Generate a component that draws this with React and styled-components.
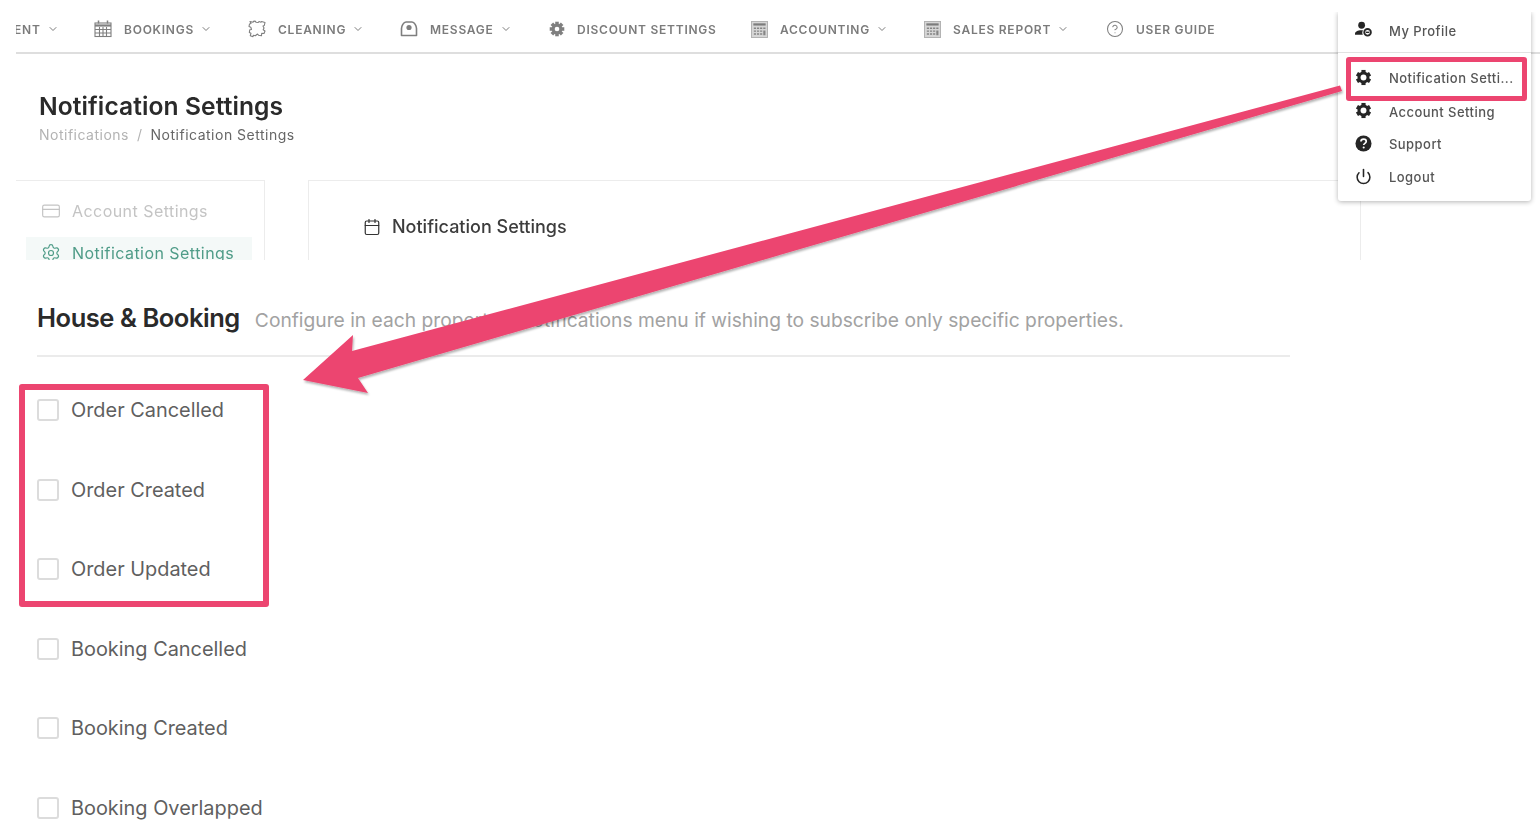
import React from 'react';
import styled, { createGlobalStyle } from 'styled-components';
import { Calendar, ChevronDown, Settings, CircleHelp, Power, CreditCard } from 'lucide-react';

const Global = createGlobalStyle`
  html, body { margin: 0; padding: 0; background: #fff; }
  body { font-family: Inter, "Liberation Sans", sans-serif; }
`;
const Page = styled.div`
  position: relative; width: 1540px; height: 840px; overflow: hidden; background: #fff;
`;
const Top = styled.div`
  height: 260px; margin-left: 16px; overflow: hidden; filter: blur(0.45px);
`;
const Nav = styled.nav`
  border-bottom: 2px solid #dedede; box-sizing: border-box; height: 54px;
  display: flex; align-items: center; padding-top: 6px; overflow: hidden; white-space: nowrap;
`;
const NavItem = styled.div`
  display: flex; align-items: center; flex: none; width: ${p => p.$w}px;
  color: #7b7b7b; font-size: 12px; font-weight: 600; letter-spacing: .75px;
`;
const NavIcon = styled.span`
  display: inline-flex; align-items: center; justify-content: center; width: 18px; height: 18px;
  margin-right: ${p => p.$gap ?? 12}px; color: #7f7f7f; flex: none;
`;
const Chev = styled(ChevronDown)`
  width: 12px; height: 12px; margin-left: 6px; color: #7b7b7b;
`;
const Head = styled.div`
  padding: 38px 0 0 23px; box-sizing: border-box; height: 126px;
`;
const Title = styled.h1`
  margin: 0; font-size: 24.6px; line-height: 28px; font-weight: 600; color: #2a2a2a; letter-spacing: .08px;
`;
const Crumbs = styled.div`
  margin-top: 6px; font-size: 14px; line-height: 18px; color: #b3b3b3; display: flex; gap: 8px; letter-spacing: .5px;
`;
const Crumb = styled.span`
  color: #666;
`;
const Columns = styled.div`
  display: flex; height: 80px;
`;
const Side = styled.aside`
  width: 249px; flex: none; border: 1px solid #ececec; border-width: 1px 1px 0 0; box-sizing: border-box; padding: 10px 12px 0 10px;
`;
const SideItem = styled.div`
  height: ${p => p.$h}px; margin-top: ${p => p.$top ?? 0}px; display: flex; align-items: center; gap: 10px; padding-left: 16px; box-sizing: border-box;
  font-size: 16px; letter-spacing: .45px; white-space: nowrap;
  color: ${p => p.$active ? '#4f9c88' : '#c4c4c4'}; background: ${p => p.$active ? '#f4f9f8' : 'none'};
  svg { width: 20px; height: 20px; stroke-width: 1.4; flex: none; margin-left: -1px; margin-right: 1px; }
`;
const Card = styled.section`
  margin-left: 43px; width: 1053px; box-sizing: border-box; border: 1px solid #ececec; border-bottom: 0;
  padding: 35px 0 0 54px; display: flex; align-items: flex-start; gap: 11px;
  font-size: 18px; line-height: 22px; font-weight: 500; color: #3c3c3c;
  svg { width: 18px; height: 18px; margin-top: 2px; stroke-width: 1.6; color: #333; }
`;
const Lower = styled.main`
  padding: 0 0 0 37px;
`;
const SectionHead = styled.div`
  width: 1253px; height: 97px; box-sizing: border-box; border-bottom: 2px solid #ebebeb;
  display: flex; align-items: baseline; gap: 15px; padding-top: 41px;
`;
const SectionTitle = styled.h2`
  margin: 0; font-size: 25.5px; line-height: 34px; font-weight: 600; color: #2a2a2a; letter-spacing: -.45px;
`;
const SectionNote = styled.span`
  font-size: 19.23px; color: #a2a2a2; letter-spacing: 0; white-space: nowrap;
`;
const Rows = styled.div`
  padding-top: 29px;
`;
const Row = styled.label`
  height: 79.6px; display: flex; align-items: flex-start; gap: 12px; font-size: 19.9px; line-height: 48px; color: #5f5f5f; letter-spacing: 0;
`;
const Box = styled.span`
  width: 22px; height: 22px; box-sizing: border-box; border: 2px solid #dcdcdc; border-radius: 3px; margin-top: 13px; flex: none;
`;
const Menu = styled.div`
  position: absolute; left: 1338px; top: 12px; width: 193px; height: 189px; background: #fff; border-radius: 0 0 3px 3px;
  box-shadow: 0 1px 5px rgba(0,0,0,.3); clip-path: inset(0 -8px -8px -8px); filter: blur(0.4px);
`;
const MenuItem = styled.div`
  height: ${p => p.$h}px; display: flex; align-items: center; padding: 0 0 ${p => p.$line ? 2 : 0}px 17px; gap: 17px; box-sizing: border-box;
  font-size: 13px; letter-spacing: .45px; color: #555; font-weight: 500; white-space: nowrap;
  border-bottom: ${p => p.$line ? '1px solid #e2e2e2' : '0'};
  svg { width: 17px; height: 17px; color: #262626; flex: none; margin-top: ${p => p.$lift ?? -4}px; }
`;
const Highlight = styled.div`
  position: absolute; box-sizing: border-box; left: ${p => p.$x}px; top: ${p => p.$y}px; width: ${p => p.$w}px; height: ${p => p.$h}px;
  border: ${p => p.$b}px solid #ec4570; border-radius: 3px;
`;
const Arrow = styled.svg`
  position: absolute; left: 0; top: 0; pointer-events: none;
`;

const Cal = () => (
  <svg viewBox="0 0 18 18" width="18" height="18" fill="none" stroke="currentColor" strokeWidth="1.100">
    <rect x="1" y="3" width="16" height="13.500" />
    <path d="M1 5.500h16" strokeWidth="2.200" />
    <path d="M1 9.500h16M1 13h16M5.500 7V16.500M9 7V16.500M12.500 7V16.500" />
    <path d="M4.500 .5v3M13.500 .5v3" strokeWidth="1.500" />
  </svg>
);
const Puzzle = () => (
  <svg viewBox="0 0 18 18" width="18" height="18" fill="none" stroke="currentColor" strokeWidth="1.100" strokeLinejoin="round">
    <path d="M2 1.500l3 .7c.5-1.400 2.500-1.400 3 0l2.200.3 .8-1 2 .7 .5-.7 3.500 1-.7 3-1.300.5 1 2-.8 1.800 1.800 1.200-1 2.500-2.300-.3-.2 2.500-3-.5-1-1.200-2.200 1.700-2-.5-.3 1.500-2.700-1 .7-2.500-1.700-.7.5-2.800 1.700-.2-.7-2.300L1 6.500l.5-2.500 1.500-.5z" />
  </svg>
);
const Bag = () => (
  <svg viewBox="0 0 18 18" width="18" height="18" fill="none" stroke="currentColor" strokeWidth="1.600">
    <path d="M1.500 15.500V8.500C1.500 6 3.500 2 6 2h6c2.500 0 4.500 4 4.500 6.500v7z" strokeLinejoin="round" />
    <circle cx="9" cy="7.500" r="2.600" fill="currentColor" stroke="none" />
  </svg>
);
const Gear = () => (
  <svg viewBox="0 0 18 18" width="16" height="16">
    <g fill="currentColor">
      <circle cx="9" cy="9" r="6" />
      {[0, 45, 90, 135, 180, 225, 270, 315].map(a => (
        <rect key={a} x="7" y=".8" width="4" height="4" transform={`rotate(${a} 9 9)`} />
      ))}
    </g>
    <circle cx="9" cy="9" r="2.600" fill="#fff" />
  </svg>
);
const Calc = () => (
  <svg viewBox="0 0 18 18" width="17" height="17">
    <rect x=".5" y=".5" width="17" height="17" fill="#d6d6d6" stroke="#b0b0b0" />
    <rect x="2.500" y="2.500" width="13" height="2.300" fill="#7c7c7c" />
    <path d="M3 7h2.300v1.500H3zM6.300 7h2.300v1.500H6.300zM9.600 7h2.300v1.500H9.600zM13 7h2.300v1.500H13zM3 10h2.300v1.500H3zM6.300 10h2.300v1.500H6.300zM9.600 10h2.300v1.500H9.600zM13 10h2.300v5H13zM3 13h2.300v1.500H3zM6.300 13h2.300v1.500H6.300zM9.600 13h2.300v1.500H9.600z" fill="#858585" />
  </svg>
);
const Profile = () => (
  <svg viewBox="0 0 18 18" width="18" height="18" fill="currentColor">
    <circle cx="7" cy="4.500" r="3.600" />
    <path d="M0 13.500c0-2.500 3-3.800 6.500-3.800 1 0 1.500.1 2 .3-1 1.200-1 3.200-.2 4.500H0z" />
    <circle cx="13.300" cy="12" r="3.500" fill="none" stroke="currentColor" strokeWidth="2" />
    <path d="M11.500 12h3.600" stroke="currentColor" strokeWidth="1.500" />
  </svg>
);
const MenuGear = () => (
  <svg viewBox="0 0 18 18" width="16" height="16">
    <g fill="currentColor">
      <circle cx="9" cy="9" r="6.300" />
      {[0, 60, 120, 180, 240, 300].map(a => (
        <rect key={a} x="6.800" y="1" width="4.400" height="4" transform={`rotate(${a} 9 9)`} />
      ))}
    </g>
    <circle cx="9" cy="9" r="3.100" fill="#fff" />
  </svg>
);
const HelpSolid = () => (
  <svg viewBox="0 0 18 18" width="18" height="18">
    <circle cx="9" cy="9" r="8.500" fill="currentColor" />
    <path d="M6.300 7c0-1.700 1.200-2.600 2.800-2.600S11.900 5.300 11.900 6.800c0 2-2.700 2-2.700 3.800" fill="none" stroke="#fff" strokeWidth="1.800" />
    <circle cx="9.200" cy="13.200" r="1.100" fill="#fff" />
  </svg>
);

const nav = [
  { t: 'ENT', w: 78, clip: true },
  { t: 'BOOKINGS', w: 154, I: Cal, c: 1 },
  { t: 'CLEANING', w: 152, I: Puzzle, c: 1 },
  { t: 'MESSAGE', w: 148, I: Bag, c: 1 },
  { t: 'DISCOUNT SETTINGS', w: 202, I: Gear, gap: 11 },
  { t: 'ACCOUNTING', w: 173, I: Calc, c: 1 },
  { t: 'SALES REPORT', w: 183, I: Calc, c: 1 },
  { t: 'USER GUIDE', w: 180, I: () => <CircleHelp size={18} strokeWidth={1.4} /> },
];
const rows = ['Order Cancelled', 'Order Created', 'Order Updated', 'Booking Cancelled', 'Booking Created', 'Booking Overlapped'];

export default function App() {
  return (
    <Page>
      <Global />
      <Top>
        <Nav>
          {nav.map(n => (
            <NavItem key={n.t} $w={n.w}>
              {n.I && <NavIcon $gap={n.gap}><n.I /></NavIcon>}
              {n.clip ? <span style={{ marginLeft: -2 }}>{n.t}</span> : n.t}
              {(n.c || n.clip) && <Chev />}
            </NavItem>
          ))}
        </Nav>
        <Head>
          <Title>Notification Settings</Title>
          <Crumbs>Notifications <span>/</span> <Crumb>Notification Settings</Crumb></Crumbs>
        </Head>
        <Columns>
          <Side>
            <SideItem $h={40}><CreditCard />Account Settings</SideItem>
            <SideItem $h={32} $top={6} $active><Settings />Notification Settings</SideItem>
          </Side>
          <Card><Calendar />Notification Settings</Card>
        </Columns>
      </Top>
      <Lower>
        <SectionHead>
          <SectionTitle>House &amp; Booking</SectionTitle>
          <SectionNote>Configure in each property's notifications menu if wishing to subscribe only specific properties.</SectionNote>
        </SectionHead>
        <Rows>
          {rows.map(r => <Row key={r}><Box />{r}</Row>)}
        </Rows>
      </Lower>
      <Menu>
        <MenuItem $h={41} $line $lift={-4}><Profile />My Profile</MenuItem>
        <MenuItem $h={50} $lift={-2}><MenuGear />Notification Setti...</MenuItem>
        <MenuItem $h={18} $lift={-4}><MenuGear />Account Setting</MenuItem>
        <MenuItem $h={46} $lift={-2}><HelpSolid />Support</MenuItem>
        <MenuItem $h={20} $lift={-2}><Power strokeWidth={2.200} />Logout</MenuItem>
      </Menu>
      <Highlight $x={1346} $y={57} $w={181} $h={44} $b={5} />
      <Highlight $x={19} $y={384} $w={250} $h={223} $b={6} />
      <Arrow width="1540" height="840" viewBox="0 0 1540 840">
        <defs>
          <filter id="s" x="-5%" y="-5%" width="110%" height="115%">
            <feDropShadow dx="1" dy="2" stdDeviation="1" floodColor="#000" floodOpacity=".3" />
          </filter>
        </defs>
        <path filter="url(#s)" fill="#ec4570" d="M303 380L353 335L352 351L1340 85.500L1342 91L358 378L368 393Z" />
      </Arrow>
    </Page>
  );
}
